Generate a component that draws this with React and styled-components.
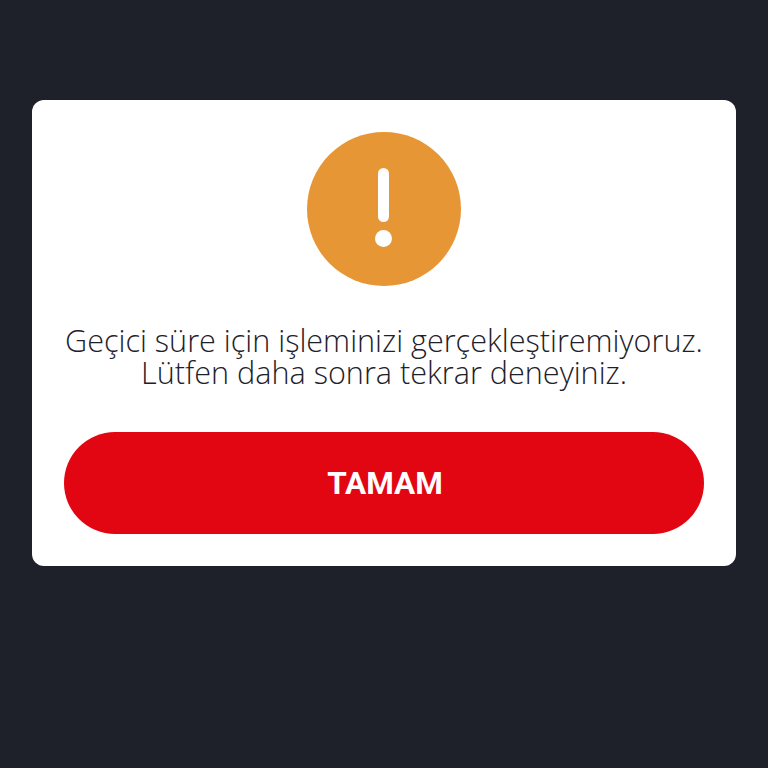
import React from "react";
import styled, { createGlobalStyle } from "styled-components";

const Global = createGlobalStyle`
  html, body { margin: 0; padding: 0; background: #1e212a; }
  body { min-height: 768px; }
`;
const Page = styled.div`
  box-sizing: border-box;
  height: 768px;
  padding: 100px 32px 0;
  background: #1e212a;
`;
const Card = styled.div`
  box-sizing: border-box;
  height: 466px;
  padding: 32px;
  background: #fff;
  border-radius: 12px;
  display: flex;
  flex-direction: column;
  align-items: center;
`;
const Icon = styled.svg`
  width: 154px;
  height: 154px;
  flex: none;
  display: block;
`;
const Message = styled.p`
  margin: 38px 0 0;
  height: 108px;
  width: 100%;
  text-align: center;
  font-family: "Open Sans", sans-serif;
  font-weight: 300;
  font-size: 30.6px;
  line-height: 32px;
  color: #1e212a;
  white-space: nowrap;
`;
const Button = styled.button`
  width: 100%;
  height: 102px;
  flex: none;
  border: 0;
  border-radius: 51px;
  background: #e20613;
  color: #fff;
  font-family: "Roboto", sans-serif;
  font-weight: 700;
  font-size: 31.5px;
  padding: 0 0 0 2px;
`;

export default function App() {
  return (
    <Page>
      <Global />
      <Card>
        <Icon viewBox="0 0 154 154">
          <circle cx="77" cy="77" r="77" fill="#e79636" />
          <rect x="71" y="36" width="11" height="54" rx="5.5" fill="#fff" />
          <circle cx="76.5" cy="106.5" r="8.5" fill="#fff" />
        </Icon>
        <Message>
          Geçici süre için işleminizi gerçekleştiremiyoruz.
          <br />
          Lütfen daha sonra tekrar deneyiniz.
        </Message>
        <Button>TAMAM</Button>
      </Card>
    </Page>
  );
}
